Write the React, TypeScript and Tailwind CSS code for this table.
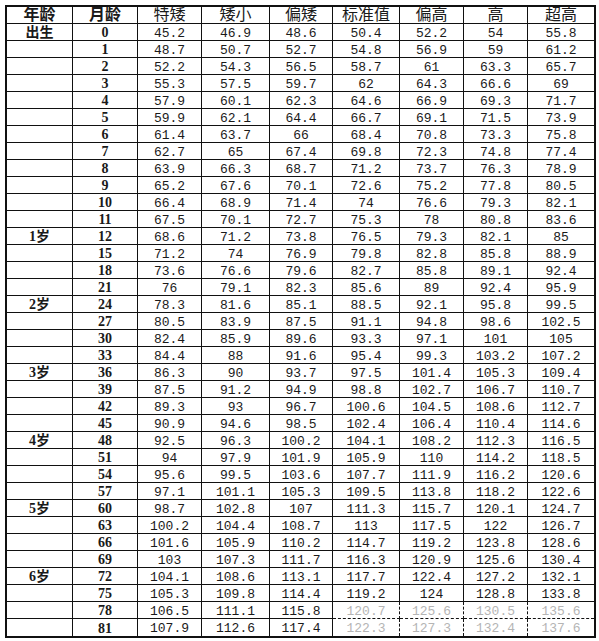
import React from "react";

type Row = { age?: string; month: string; v: string[] };

const HEADERS = ["特矮", "矮小", "偏矮", "标准值", "偏高", "高", "超高"];

// 月龄, 特矮 ... 超高
const RAW: [string, string][] = [
  ["0", "45.2 46.9 48.6 50.4 52.2 54 55.8"],
  ["1", "48.7 50.7 52.7 54.8 56.9 59 61.2"],
  ["2", "52.2 54.3 56.5 58.7 61 63.3 65.7"],
  ["3", "55.3 57.5 59.7 62 64.3 66.6 69"],
  ["4", "57.9 60.1 62.3 64.6 66.9 69.3 71.7"],
  ["5", "59.9 62.1 64.4 66.7 69.1 71.5 73.9"],
  ["6", "61.4 63.7 66 68.4 70.8 73.3 75.8"],
  ["7", "62.7 65 67.4 69.8 72.3 74.8 77.4"],
  ["8", "63.9 66.3 68.7 71.2 73.7 76.3 78.9"],
  ["9", "65.2 67.6 70.1 72.6 75.2 77.8 80.5"],
  ["10", "66.4 68.9 71.4 74 76.6 79.3 82.1"],
  ["11", "67.5 70.1 72.7 75.3 78 80.8 83.6"],
  ["12", "68.6 71.2 73.8 76.5 79.3 82.1 85"],
  ["15", "71.2 74 76.9 79.8 82.8 85.8 88.9"],
  ["18", "73.6 76.6 79.6 82.7 85.8 89.1 92.4"],
  ["21", "76 79.1 82.3 85.6 89 92.4 95.9"],
  ["24", "78.3 81.6 85.1 88.5 92.1 95.8 99.5"],
  ["27", "80.5 83.9 87.5 91.1 94.8 98.6 102.5"],
  ["30", "82.4 85.9 89.6 93.3 97.1 101 105"],
  ["33", "84.4 88 91.6 95.4 99.3 103.2 107.2"],
  ["36", "86.3 90 93.7 97.5 101.4 105.3 109.4"],
  ["39", "87.5 91.2 94.9 98.8 102.7 106.7 110.7"],
  ["42", "89.3 93 96.7 100.6 104.5 108.6 112.7"],
  ["45", "90.9 94.6 98.5 102.4 106.4 110.4 114.6"],
  ["48", "92.5 96.3 100.2 104.1 108.2 112.3 116.5"],
  ["51", "94 97.9 101.9 105.9 110 114.2 118.5"],
  ["54", "95.6 99.5 103.6 107.7 111.9 116.2 120.6"],
  ["57", "97.1 101.1 105.3 109.5 113.8 118.2 122.6"],
  ["60", "98.7 102.8 107 111.3 115.7 120.1 124.7"],
  ["63", "100.2 104.4 108.7 113 117.5 122 126.7"],
  ["66", "101.6 105.9 110.2 114.7 119.2 123.8 128.6"],
  ["69", "103 107.3 111.7 116.3 120.9 125.6 130.4"],
  ["72", "104.1 108.6 113.1 117.7 122.4 127.2 132.1"],
  ["75", "105.3 109.8 114.4 119.2 124 128.8 133.8"],
  ["78", "106.5 111.1 115.8 120.7 125.6 130.5 135.6"],
  ["81", "107.9 112.6 117.4 122.3 127.3 132.4 137.6"],
];

const AGES: Record<string, string> = {
  "0": "出生",
  "12": "1岁",
  "24": "2岁",
  "36": "3岁",
  "48": "4岁",
  "60": "5岁",
  "72": "6岁",
};

const rows: Row[] = RAW.map(([m, s]) => ({ age: AGES[m], month: m, v: s.split(" ") }));

const cjk = "font-['Liberation_Serif','Noto_Sans_CJK_SC',serif]";
const mono = "font-['Liberation_Mono','Noto_Sans_CJK_SC',monospace]";

export default function App() {
  return (
    <div className="bg-white w-[599px] h-[641px] pt-[5px] pl-[5px]">
      <div className="w-[591px] border-2 border-[#111] grid grid-cols-[66px_65px_64px_68px_63px_67px_64px_64px_66px] text-[#1a1a1a]">
        {/* header */}
        <div className={`h-[17px] border-r border-b border-[#111] flex items-center justify-center text-[16px] font-bold leading-none ${cjk}`}>
          年龄
        </div>
        <div className={`h-[17px] border-r border-b border-[#111] flex items-center justify-center text-[16px] font-bold leading-none ${cjk}`}>
          月龄
        </div>
        {HEADERS.map((h, i) => (
          <div
            key={h}
            className={`h-[17px] border-b border-[#111] flex items-center justify-center text-[16px] leading-none ${cjk} ${
              i < HEADERS.length - 1 ? "border-r" : ""
            }`}
          >
            {h}
          </div>
        ))}

        {rows.map((r, ri) => {
          const last = ri === rows.length - 1;
          const faded = ri >= rows.length - 2;
          return (
            <React.Fragment key={r.month}>
              <div
                className={`h-[17px] border-r border-[#111] flex items-center justify-center pt-[1px] text-[14px] font-bold leading-none ${cjk} ${
                  last ? "" : "border-b"
                }`}
              >
                {r.age}
              </div>
              <div
                className={`h-[17px] border-r border-[#111] flex items-center justify-center pt-[2px] text-[14px] font-bold leading-none font-['Liberation_Serif',serif] ${
                  last ? "" : "border-b"
                }`}
              >
                {r.month}
              </div>
              {r.v.map((val, ci) => (
                <div
                  key={ci}
                  className={`h-[17px] border-[#111] flex items-center justify-center pt-[2px] text-[13px] leading-none ${mono} ${
                    last ? "" : "border-b"
                  } ${ci < r.v.length - 1 ? "border-r" : ""} ${
                    faded && ci >= 3 ? "text-[#b5b5b5] border-dashed" : ""
                  }`}
                >
                  {val}
                </div>
              ))}
            </React.Fragment>
          );
        })}
      </div>
    </div>
  );
}
